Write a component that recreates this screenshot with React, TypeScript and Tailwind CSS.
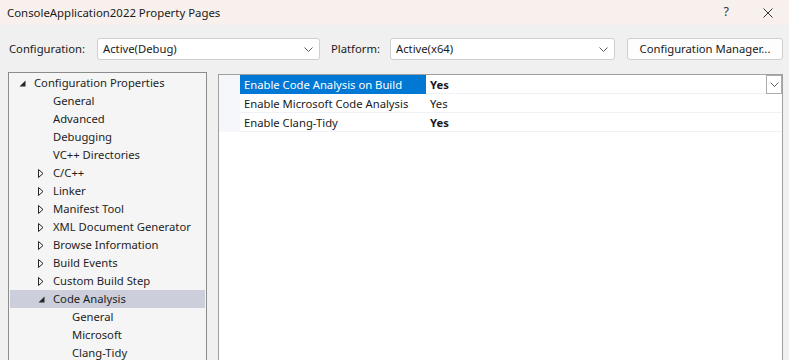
import React from "react";

const Chevron = ({ className = "" }: { className?: string }) => (
  <svg width="9" height="5" viewBox="0 0 9 5" className={className}>
    <path d="M0.5 0.5 L4.5 4.5 L8.5 0.5" fill="none" stroke="#606060" strokeWidth="1" />
  </svg>
);

const Expanded = () => (
  <svg width="7" height="7" viewBox="0 0 7 7">
    <polygon points="6.5,0.5 6.5,6.5 0.5,6.5" fill="#262626" />
  </svg>
);

const Collapsed = () => (
  <svg width="6" height="9" viewBox="0 0 6 9">
    <path d="M0.5 0.5 L5 4.5 L0.5 8.5 Z" fill="none" stroke="#262626" strokeWidth="1" />
  </svg>
);

type Item = { label: string; level: number; state?: "open" | "closed"; selected?: boolean };

const items: Item[] = [
  { label: "Configuration Properties", level: 0, state: "open" },
  { label: "General", level: 1 },
  { label: "Advanced", level: 1 },
  { label: "Debugging", level: 1 },
  { label: "VC++ Directories", level: 1 },
  { label: "C/C++", level: 1, state: "closed" },
  { label: "Linker", level: 1, state: "closed" },
  { label: "Manifest Tool", level: 1, state: "closed" },
  { label: "XML Document Generator", level: 1, state: "closed" },
  { label: "Browse Information", level: 1, state: "closed" },
  { label: "Build Events", level: 1, state: "closed" },
  { label: "Custom Build Step", level: 1, state: "closed" },
  { label: "Code Analysis", level: 1, state: "open", selected: true },
  { label: "General", level: 2 },
  { label: "Microsoft", level: 2 },
  { label: "Clang-Tidy", level: 2 },
];

const indent: Record<number, string> = {
  0: "pl-[24px]",
  1: "pl-[43px]",
  2: "pl-[62px]",
};

function TreeRow({ item }: { item: Item }) {
  return (
    <div
      className={`relative h-[18px] flex items-center ${indent[item.level]} ${
        item.selected ? "bg-[#cccedb]" : ""
      }`}
    >
      {item.state && (
        <span className="absolute top-0 h-[18px] flex items-center" style={{ left: item.level === 0 ? 9 : 28 }}>
          {item.state === "open" ? <Expanded /> : <Collapsed />}
        </span>
      )}
      <span className="whitespace-nowrap text-[#1e1e1e]">{item.label}</span>
    </div>
  );
}

function Combo({ text, width }: { text: string; width: string }) {
  return (
    <div
      className={`${width} h-[22px] bg-white border border-[#cfcfcf] rounded-[3px] flex items-center justify-between pl-[5px] pr-[6px]`}
    >
      <span className="text-[#1a1a1a]">{text}</span>
      <Chevron />
    </div>
  );
}

const props = [
  { name: "Enable Code Analysis on Build", value: "Yes", bold: true, selected: true },
  { name: "Enable Microsoft Code Analysis", value: "Yes", bold: false },
  { name: "Enable Clang-Tidy", value: "Yes", bold: true },
];

export default function App() {
  return (
    <div className="w-[789px] h-[360px] overflow-hidden bg-[#f0f0f0] font-['Noto_Sans',sans-serif] text-[11.25px] leading-none text-[#1a1a1a]">
      {/* title bar */}
      <div className="h-[25px] bg-[#f8f0ec] flex items-center pl-[7px]">
        <span className="text-[#1a1a1a] text-[11.4px]">ConsoleApplication2022 Property Pages</span>
        <span className="ml-auto mr-[34px] text-[12.5px] text-[#333]">?</span>
        <svg width="10" height="10" viewBox="0 0 10 10" className="mr-[16px]">
          <path d="M0.5 0.5 L9.5 9.5 M9.5 0.5 L0.5 9.5" stroke="#333" strokeWidth="1" />
        </svg>
      </div>

      {/* config row */}
      <div className="mt-[13px] h-[22px] flex items-center">
        <span className="ml-[9px] w-[88px]">Configuration:</span>
        <Combo text="Active(Debug)" width="w-[223px]" />
        <span className="ml-[11px] w-[59px]">Platform:</span>
        <Combo text="Active(x64)" width="w-[225px]" />
        <div className="ml-[12px] w-[156px] h-[22px] bg-[#fdfdfd] border border-[#cfcfcf] rounded-[3px] flex items-center justify-center">
          Configuration Manager...
        </div>
      </div>

      {/* main */}
      <div className="mt-[12px] flex">
        <div className="ml-[8px] w-[199px] h-[300px] bg-[#f5f5f5] border border-[#8c8c8c] pt-[1px] px-[1px]">
          {items.map((it, i) => (
            <TreeRow key={i} item={it} />
          ))}
        </div>
        <div className="ml-[11px] mt-[2px] w-[565px] h-[300px] bg-white border border-[#a0a0a0]">
          {props.map((p, i) => (
            <div key={i} className="flex h-[19px]">
              <div className="w-[21px] bg-[#f5f7fb]" />
              <div
                className={`w-[186px] flex items-center pl-[4px] pt-[1px] border-b ${
                  p.selected ? "bg-[#0078d4] text-white border-[#0078d4]" : "border-[#eef1f6]"
                }`}
              >
                {p.name}
              </div>
              <div className="flex-1 flex items-center border-b border-[#eef1f6] pl-[4px] pt-[1px]">
                <span className={p.bold ? "font-bold" : ""}>{p.value}</span>
                {p.selected && (
                  <div className="ml-auto mr-0 w-[16px] h-[19px] border border-[#ababab] bg-white flex items-center justify-center">
                    <Chevron />
                  </div>
                )}
              </div>
            </div>
          ))}
        </div>
      </div>
    </div>
  );
}
